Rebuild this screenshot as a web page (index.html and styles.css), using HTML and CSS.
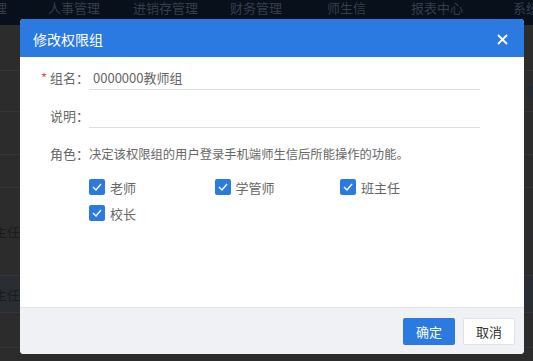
FILE: index.html
```html
<!DOCTYPE html>
<html lang="zh-CN">
<head>
    <meta charset="UTF-8">
    <title>修改权限组</title>
    <link rel="stylesheet" href="styles.css">
</head>
<body>
    <div class="topnav">
        <span class="nav-item nav-first">理</span>
        <span class="nav-item">人事管理</span>
        <span class="nav-item">进销存管理</span>
        <span class="nav-item">财务管理</span>
        <span class="nav-item">师生信</span>
        <span class="nav-item">报表中心</span>
        <span class="nav-item">系统</span>
    </div>

    <div class="page-table">
        <div class="row h46"></div>
        <div class="row h41"><span></span><span class="right-text">教</span></div>
        <div class="row h43"></div>
        <div class="row h33"></div>
        <div class="row h88"><span class="left-text">主任,</span><span class="right-text">a</span></div>
        <div class="row h37 alt"><span class="left-text">主任,</span><span class="right-text">a</span></div>
        <div class="row h35"></div>
        <div class="row h13"></div>
    </div>

    <div class="modal">
        <div class="modal-header">
            <span class="modal-title">修改权限组</span>
            <span class="modal-close">
                <svg width="11" height="11" viewBox="0 0 11 11"><path d="M1 1L10 10M10 1L1 10" stroke="#fff" stroke-width="1.8"/></svg>
            </span>
        </div>

        <div class="modal-body">
            <div class="form-item">
                <label class="form-label"><i class="required">*</i>组名：</label>
                <input class="form-input" type="text" value="0000000教师组">
            </div>
            <div class="form-item">
                <label class="form-label">说明：</label>
                <input class="form-input" type="text" value="">
            </div>
            <div class="form-item">
                <label class="form-label">角色：</label>
                <span class="form-tip">决定该权限组的用户登录手机端师生信后所能操作的功能。</span>
            </div>
            <div class="check-grid">
                <label class="check"><span class="check-box"><svg width="10" height="8" viewBox="0 0 10 8"><path d="M1 4L4 7L9 1" fill="none" stroke="#fff" stroke-width="1.4"/></svg></span>老师</label>
                <label class="check"><span class="check-box"><svg width="10" height="8" viewBox="0 0 10 8"><path d="M1 4L4 7L9 1" fill="none" stroke="#fff" stroke-width="1.4"/></svg></span>学管师</label>
                <label class="check"><span class="check-box"><svg width="10" height="8" viewBox="0 0 10 8"><path d="M1 4L4 7L9 1" fill="none" stroke="#fff" stroke-width="1.4"/></svg></span>班主任</label>
                <label class="check"><span class="check-box"><svg width="10" height="8" viewBox="0 0 10 8"><path d="M1 4L4 7L9 1" fill="none" stroke="#fff" stroke-width="1.4"/></svg></span>校长</label>
            </div>
        </div>

        <div class="modal-footer">
            <button class="btn btn-primary">确定</button>
            <button class="btn btn-default">取消</button>
        </div>
    </div>
</body>
</html>
```

FILE: styles.css
```css
* {
    margin: 0;
    padding: 0;
    box-sizing: border-box;
}

body {
    font-family: "Noto Sans CJK SC", "Noto Sans", sans-serif;
    background-color: #2c2c2c;
    width: 533px;
    height: 361px;
    overflow: hidden;
}

/* dimmed page behind the dialog */
.topnav {
    height: 25px;
    background-color: #07101b;
    display: flex;
    align-items: flex-start;
    font-size: 13px;
    line-height: 16px;
    color: #363e4c;
    white-space: nowrap;
    overflow: hidden;
}

.nav-item:nth-child(1) { margin-left: -6px; }
.nav-item:nth-child(2) { margin-left: 41px; }
.nav-item:nth-child(3) { margin-left: 33px; }
.nav-item:nth-child(4) { margin-left: 32px; }
.nav-item:nth-child(5) { margin-left: 45px; }
.nav-item:nth-child(6) { margin-left: 45px; }
.nav-item:nth-child(7) { margin-left: 50px; }

.row {
    border-bottom: 1px solid #363636;
    display: flex;
    justify-content: space-between;
    align-items: center;
    font-size: 13px;
    color: #1b1b1b;
    overflow: hidden;
}

.h13 { height: 13px; border-bottom: none; }
.h33 { height: 33px; }
.h35 { height: 35px; }
.h37 { height: 37px; }
.h41 { height: 41px; }
.h43 { height: 43px; }
.h46 { height: 46px; }
.h88 { height: 88px; }

.row.alt {
    background-color: #2a2e33;
}

.left-text {
    margin-left: -6px;
}

.right-text {
    margin-right: -6px;
    color: #1e2a3c;
}

/* dialog */
.modal {
    position: absolute;
    left: 20px;
    top: 19px;
    width: 504px;
    height: 335px;
    background: #fff;
    border-radius: 4px;
    overflow: hidden;
    display: flex;
    flex-direction: column;
}

.modal-header {
    height: 38px;
    background-color: #2a7ae2;
    display: flex;
    align-items: center;
    justify-content: space-between;
    padding: 2px 16px 0 13px;
}

.modal-title {
    color: #fff;
    font-size: 14px;
}

.modal-close {
    display: flex;
    align-items: center;
}

.modal-body {
    flex: 1;
    padding-top: 8px;
}

.form-item {
    display: flex;
    align-items: center;
    height: 25px;
    margin-bottom: 13px;
}

.form-label {
    width: 69px;
    text-align: right;
    font-size: 13px;
    color: #666;
}

.required {
    font-style: normal;
    color: #f04848;
    margin-right: 3px;
}

.form-input {
    width: 391px;
    height: 25px;
    border: none;
    border-bottom: 1px solid #dcdee5;
    outline: none;
    padding: 0 4px;
    font-family: inherit;
    font-size: 13px;
    color: #666;
}

.form-tip {
    font-size: 12.3px;
    color: #666;
}

.check-grid {
    display: grid;
    grid-template-columns: repeat(3, 125.5px);
    row-gap: 8px;
    padding-left: 69px;
    margin-top: -1px;
}

.check {
    display: flex;
    align-items: center;
    gap: 5px;
    height: 18px;
    font-size: 13px;
    color: #666;
}

.check-box {
    width: 16px;
    height: 16px;
    border-radius: 2px;
    background-color: #2a7ae2;
    display: flex;
    align-items: center;
    justify-content: center;
}

.modal-footer {
    height: 47px;
    background-color: #f0f1f5;
    border-top: 1px solid #e2e4ea;
    display: flex;
    align-items: center;
    justify-content: flex-end;
    gap: 8px;
    padding: 0 9px 0 0;
}

.btn {
    width: 52px;
    height: 27px;
    border-radius: 2px;
    font-family: inherit;
    font-size: 13px;
    cursor: pointer;
}

.btn-primary {
    background-color: #2a7ae2;
    border: none;
    color: #fff;
}

.btn-default {
    background-color: #fff;
    border: 1px solid #dfe1e6;
    color: #333;
}
```
